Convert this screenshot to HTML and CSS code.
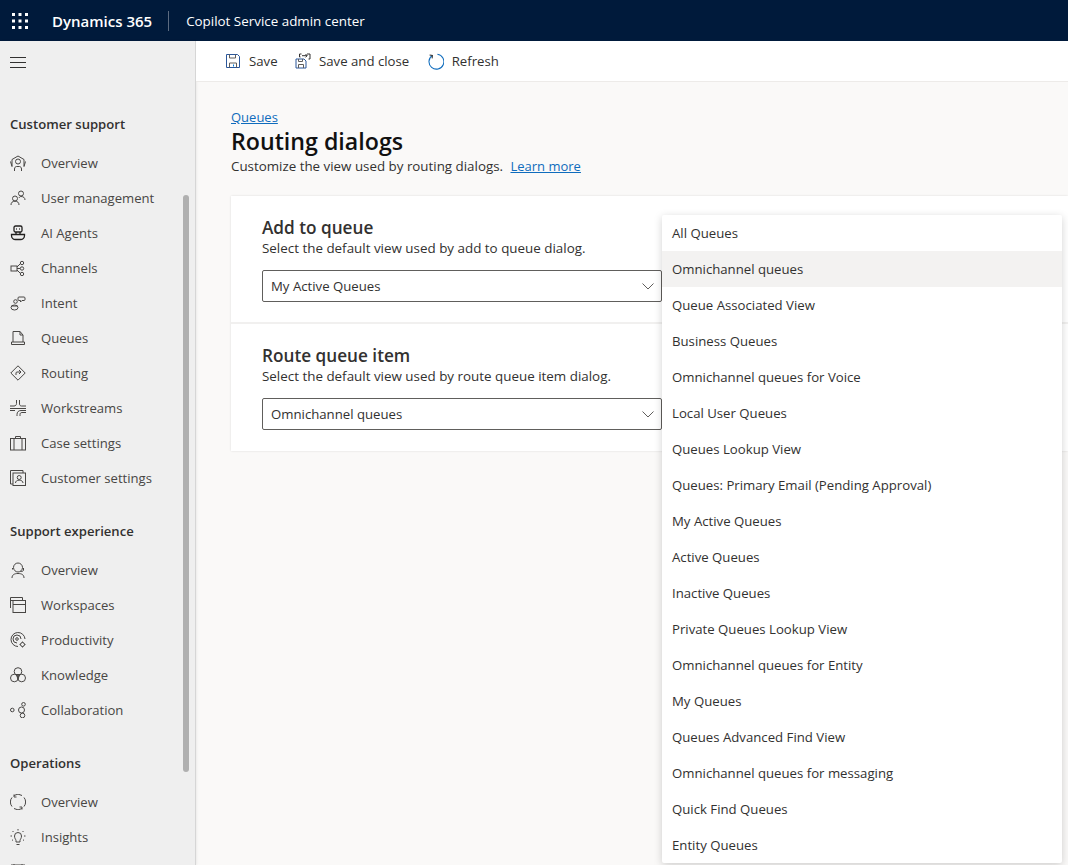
FILE: index.html
```html
<!DOCTYPE html>
<html>
<head>
  <meta charset="utf-8">
  <title>Routing dialogs</title>
  <link rel="stylesheet" href="styles.css">
</head>
<body>
  <header class="topbar">
    <svg class="waffle" viewBox="0 0 16 16"><g fill="#fff"><rect x="0" y="0" width="3" height="3"/><rect x="6.5" y="0" width="3" height="3"/><rect x="13" y="0" width="3" height="3"/><rect x="0" y="6.5" width="3" height="3"/><rect x="6.5" y="6.5" width="3" height="3"/><rect x="13" y="6.5" width="3" height="3"/><rect x="0" y="13" width="3" height="3"/><rect x="6.5" y="13" width="3" height="3"/><rect x="13" y="13" width="3" height="3"/></g></svg>
    <span class="brand">Dynamics 365</span>
    <span class="app-name">Copilot Service admin center</span>
  </header>

  <div class="shell">
    <nav class="sidebar">
      <div class="menu-btn">
        <svg width="16" height="11" viewBox="0 0 16 11"><path d="M0 .5h16M0 5.5h16M0 10.5h16" stroke="#323130" fill="none"/></svg>
      </div>

      <h3 class="nav-title first">Customer support</h3>
      <a class="nav-item"><svg class="ico" viewBox="0 0 16 16"><circle cx="8" cy="6.500" r="2.500"/><path d="M4.500 16v-2c0-1.500 1-2.500 2-2.500h3c1 0 2 1 2 2.500v2M2 11.500V4.500L8 1l6 3.500v7M.5 6.500l1.500 5M15.500 6.500l-1.500 5"/></svg>Overview</a>
      <a class="nav-item"><svg class="ico" viewBox="0 0 16 16"><circle cx="5" cy="8.500" r="2.500"/><path d="M1 15c0-2.500 1.500-3.800 4-3.800S9 12.500 9 15"/><circle cx="11" cy="3.500" r="2.500"/><path d="M9 8c.5-1 1-1.500 2-1.500 2.500 0 4 1.300 4 3.500"/></svg>User management</a>
      <a class="nav-item"><svg class="ico dark" viewBox="0 0 16 16"><rect x="4" y="1" width="8" height="6" rx="1.500"/><path d="M6 4h.8M9.200 4h.8M6 7v2M10 7v2M1.500 9.500h13v1c0 2.500-2 4-4 4h-5c-2 0-4-1.500-4-4z"/></svg>AI Agents</a>
      <a class="nav-item"><svg class="ico" viewBox="0 0 16 16"><rect x="1" y="6" width="6" height="5"/><path d="M7 7l3-3M7 8.500h3M7 10l3 3"/><circle cx="12" cy="3" r="1.700"/><circle cx="12" cy="8.500" r="1.700"/><circle cx="12" cy="14" r="1.700"/></svg>Channels</a>
      <a class="nav-item"><svg class="ico" viewBox="0 0 16 16"><ellipse cx="4.500" cy="12.500" rx="3.500" ry="2.500"/><path d="M1.500 11h6"/><circle cx="5.500" cy="6.500" r="1.800"/><path d="M9 2h5c.7 0 1 .5 1 1v1.500c0 .7-.5 1-1 1h-2l-1.500 1.500V5.500H9c-.7 0-1-.5-1-1V3c0-.5.3-1 1-1z"/></svg>Intent</a>
      <a class="nav-item"><svg class="ico" viewBox="0 0 16 16"><path d="M3 12V1.500h7L13 5v7M10 1.500V5h3M1.500 12h13v2.500h-13z"/></svg>Queues</a>
      <a class="nav-item"><svg class="ico" viewBox="0 0 16 16"><path d="M8 .8L15.200 8 8 15.200.8 8z"/><path d="M6 10V8c0-.6.400-1 1-1h3.500M9 5l2 2-2 2"/></svg>Routing</a>
      <a class="nav-item"><svg class="ico" viewBox="0 0 16 16"><path d="M6.500 0v3.500c0 1.500-1 2.500-2.500 2.500H0M9.500 0v4c0 1.200.8 2 2 2H16M0 8.500h16M16 10.500h-5c-2.500 0-4 1.500-4 4V16M16 12.500h-4c-1.300 0-2 .8-2 2V16M0 10.500h5"/></svg>Workstreams</a>
      <a class="nav-item"><svg class="ico" viewBox="0 0 16 16"><rect x=".5" y="3.500" width="15" height="11.500"/><path d="M4 3.500V15M12 3.500V15M5.500 3.500V1.500h5v2"/></svg>Case settings</a>
      <a class="nav-item"><svg class="ico" viewBox="0 0 16 16"><path d="M3 14H.5V.5H13V3"/><rect x="3" y="3" width="12.500" height="12.500"/><circle cx="9.200" cy="7.500" r="2"/><path d="M5.500 13c0-1.800 1.500-2.800 3.700-2.800S13 11.200 13 13"/></svg>Customer settings</a>

      <h3 class="nav-title">Support experience</h3>
      <a class="nav-item"><svg class="ico" viewBox="0 0 16 16"><circle cx="8" cy="5.500" r="4.500"/><path d="M2.500 6v1.500M13.500 6v2c0 1-1 1.500-3 1.500M2 16c0-3 2-4.500 6-4.500s6 1.500 6 4.500"/></svg>Overview</a>
      <a class="nav-item"><svg class="ico" viewBox="0 0 16 16"><path d="M.5 11V.5H12.500V3M.5 3.500h12"/><rect x="3" y="3.500" width="12.500" height="12"/><path d="M3 7.500h12.500"/></svg>Workspaces</a>
      <a class="nav-item"><svg class="ico" viewBox="0 0 16 16"><path d="M8 14.500A7 7 0 1 1 15 7"/><path d="M7 11a4 4 0 1 1 4-4"/><circle cx="7" cy="7" r="1.300"/><circle cx="12.500" cy="12.500" r="2"/><path d="M12.500 9.500v1M12.500 14.500v1M9.500 12.500h1M14.500 12.500h1"/></svg>Productivity</a>
      <a class="nav-item"><svg class="ico" viewBox="0 0 16 16"><circle cx="8" cy="4.500" r="3.800"/><circle cx="4.300" cy="11" r="3.800"/><circle cx="11.700" cy="11" r="3.800"/><path d="M6 7l2 5M10 7l-2 5M5 7.500h6"/></svg>Knowledge</a>
      <a class="nav-item"><svg class="ico" viewBox="0 0 16 16"><circle cx="2.300" cy="8" r="1.800"/><circle cx="13.500" cy="2.300" r="1.800"/><circle cx="11.500" cy="8" r="3"/><circle cx="12.500" cy="13.500" r="2.300"/></svg>Collaboration</a>

      <h3 class="nav-title">Operations</h3>
      <a class="nav-item"><svg class="ico" viewBox="0 0 16 16"><path d="M2 12.500A7 7 0 0 1 2 3.500M14 3.500A7 7 0 0 1 14 12.500M4 1.500A7 7 0 0 1 12 1.500M12 14.500A7 7 0 0 1 4 14.500M4 .500v2.500h2.500M12 15.500V13H9.500"/></svg>Overview</a>
      <a class="nav-item"><svg class="ico" viewBox="0 0 16 16"><path d="M6 13v-1.500C6 10.500 4.500 9.500 4.500 7a3.500 3.500 0 0 1 7 0c0 2.500-1.500 3.500-1.500 4.500V13zM6.500 15.500h3M8 0v1.500M2.500 2l1 1M13.500 2l-1 1M.5 7H2M14 7h1.500M2 11.500l1-.8M14 11.500l-1-.8"/></svg>Insights</a>
      <a class="nav-item"><svg class="ico" viewBox="0 0 16 16"><path d="M1 1h14M4 0v3M12 0v3"/></svg></a>
      <div class="scroll-thumb"></div>
    </nav>

    <main class="content">
      <div class="toolbar">
        <a class="tool">
          <svg class="tool-ico" viewBox="0 0 16 16"><path d="M1.500 1.500h11l2 2v11h-13z" stroke="#2b579a"/><path d="M4.500 14.500v-4.500h7v4.500M4.500 1.500v3.500h6V1.500" stroke="#605e5c"/><path d="M8.500 11.500v2" stroke="#0078d4"/></svg>
          Save
        </a>
        <a class="tool">
          <svg class="tool-ico" viewBox="0 0 16 16"><path d="M1 6h8l2 2v7H1z" stroke="#2b579a"/><path d="M3.500 15v-3.500h5V15M3.500 6v2.500h4V6" stroke="#605e5c"/><path d="M6.500 1H4.500v3h1M12 1h3v5h-1.500M7 2.700h5M10.500 1l1.700 1.700-1.700 1.700" stroke="#323130"/></svg>
          Save and close
        </a>
        <a class="tool">
          <svg class="tool-ico refresh" viewBox="0 0 16 16"><path d="M5 2.300A7 7 0 1 0 9.800 1.200" stroke="#0f6cbd"/><path d="M2.500 1.500L5 2.300 4.300 5" stroke="#323130" transform="rotate(-10 5 2)"/></svg>
          Refresh
        </a>
      </div>

      <div class="page">
        <a class="crumb">Queues</a>
        <h1 class="page-title">Routing dialogs</h1>
        <p class="page-desc">Customize the view used by routing dialogs. <a class="learn">Learn more</a></p>

        <div class="card">
          <section class="card-section">
            <h2>Add to queue</h2>
            <p>Select the default view used by add to queue dialog.</p>
            <div class="combo">
              <span>My Active Queues</span>
              <svg width="12" height="7" viewBox="0 0 12 7"><path d="M.5.500L6 6 11.500.500" fill="none" stroke="#605e5c"/></svg>
            </div>
          </section>
          <section class="card-section">
            <h2>Route queue item</h2>
            <p>Select the default view used by route queue item dialog.</p>
            <div class="combo">
              <span>Omnichannel queues</span>
              <svg width="12" height="7" viewBox="0 0 12 7"><path d="M.5.500L6 6 11.500.500" fill="none" stroke="#605e5c"/></svg>
            </div>
          </section>
        </div>
      </div>

      <ul class="dropdown">
        <li>All Queues</li>
        <li class="hover">Omnichannel queues</li>
        <li>Queue Associated View</li>
        <li>Business Queues</li>
        <li>Omnichannel queues for Voice</li>
        <li>Local User Queues</li>
        <li>Queues Lookup View</li>
        <li>Queues: Primary Email (Pending Approval)</li>
        <li>My Active Queues</li>
        <li>Active Queues</li>
        <li>Inactive Queues</li>
        <li>Private Queues Lookup View</li>
        <li>Omnichannel queues for Entity</li>
        <li>My Queues</li>
        <li>Queues Advanced Find View</li>
        <li>Omnichannel queues for messaging</li>
        <li>Quick Find Queues</li>
        <li>Entity Queues</li>
      </ul>
    </main>
  </div>
</body>
</html>
```

FILE: styles.css
```css
* {
  box-sizing: border-box;
}
html, body {
  height: 100%;
}
body {
  margin: 0;
  height: 865px;
  overflow: hidden;
  font-family: "Open Sans", "Noto Sans", Arial, sans-serif;
  font-size: 13px;
  color: #323130;
  background: #faf9f8;
}

/* top bar */
.topbar {
  height: 41px;
  background: #001a3b;
  color: #fff;
  display: flex;
  align-items: center;
  padding-left: 12px;
}
.waffle {
  width: 16px;
  height: 16px;
  margin-right: 24px;
}
.brand {
  font-size: 15px;
  font-weight: 600;
  padding-right: 16px;
  margin-right: 17px;
  border-right: 1px solid #5c6b80;
  line-height: 20px;
}
.app-name {
  font-size: 13.4px;
}

.shell {
  display: flex;
  height: 824px;
}

/* left nav */
.sidebar {
  width: 196px;
  flex: none;
  background: #efefef;
  border-right: 1px solid #d6d6d6;
  box-shadow: 1px 0 2px rgba(0, 0, 0, 0.06);
  overflow: hidden;
  position: relative;
  padding-left: 10px;
}
.menu-btn {
  height: 42px;
  display: flex;
  align-items: center;
}
.nav-title {
  margin: 26px 0 11px;
  height: 20px;
  line-height: 20px;
  font-size: 13.1px;
  font-weight: 600;
}
.nav-title.first {
  margin-top: 31px;
}
.nav-item {
  display: flex;
  align-items: center;
  height: 35px;
  color: #484644;
  font-size: 13.1px;
  white-space: nowrap;
}
.ico {
  width: 16px;
  height: 16px;
  margin-right: 15px;
  flex: none;
  fill: none;
  stroke: #484644;
  stroke-width: 1;
}
.ico.dark {
  stroke: #201f1e;
  stroke-width: 1.3;
}
.scroll-thumb {
  position: absolute;
  left: 183px;
  top: 154px;
  width: 6px;
  height: 577px;
  border-radius: 3px;
  background: #b0b0b0;
}

/* main area */
.content {
  flex: 1;
  min-width: 0;
  position: relative;
}
.toolbar {
  height: 41px;
  background: #fff;
  border-bottom: 1px solid #edebe9;
  display: flex;
  align-items: center;
  padding-left: 29px;
  gap: 17.5px;
}
.tool {
  display: flex;
  align-items: center;
  gap: 8px;
  font-size: 13.2px;
  color: #323130;
}
.tool-ico {
  width: 16px;
  height: 16px;
  fill: none;
  stroke-width: 1;
}
.tool-ico.refresh {
  width: 17px;
  height: 17px;
}
.page {
  padding: 26px 0 0 35px;
}
.crumb, .learn {
  color: #0f6cbd;
  text-decoration: underline;
}
.crumb {
  display: block;
  font-size: 13px;
  line-height: 18px;
}
.page-title {
  margin: 0;
  font-size: 23.2px;
  font-weight: 600;
  line-height: 30px;
  color: #111;
}
.page-desc {
  margin: 0;
  line-height: 20px;
  font-size: 13.35px;
}
.learn {
  margin-left: 4px;
  font-size: 13px;
}
.card {
  margin-top: 20px;
  background: #fff;
  box-shadow: 0 0 2px rgba(0, 0, 0, 0.12);
}
.card-section {
  height: 126px;
  padding: 20px 0 0 31px;
}
.card-section + .card-section {
  height: 129px;
  border-top: 2px solid #f1f0ef;
  padding-top: 20px;
}
.card-section h2 {
  margin: 0;
  font-size: 17.2px;
  font-weight: 600;
  line-height: 24px;
}
.card-section p {
  margin: 0;
  font-size: 13.4px;
  line-height: 16px;
}
.combo {
  width: 400px;
  height: 32px;
  margin-top: 14px;
  border: 1px solid #605e5c;
  border-radius: 2px;
  display: flex;
  align-items: center;
  justify-content: space-between;
  padding: 0 7px 0 8px;
  font-size: 13.2px;
}

/* open dropdown */
.dropdown {
  position: absolute;
  left: 466px;
  top: 174px;
  width: 400px;
  margin: 0;
  padding: 0;
  list-style: none;
  background: #fff;
  border-radius: 2px;
  box-shadow: 0 2px 8px rgba(0, 0, 0, 0.18);
}
.dropdown li {
  height: 36px;
  line-height: 36px;
  padding-left: 10px;
  font-size: 13.2px;
}
.dropdown li.hover {
  background: #f3f2f1;
}
```
